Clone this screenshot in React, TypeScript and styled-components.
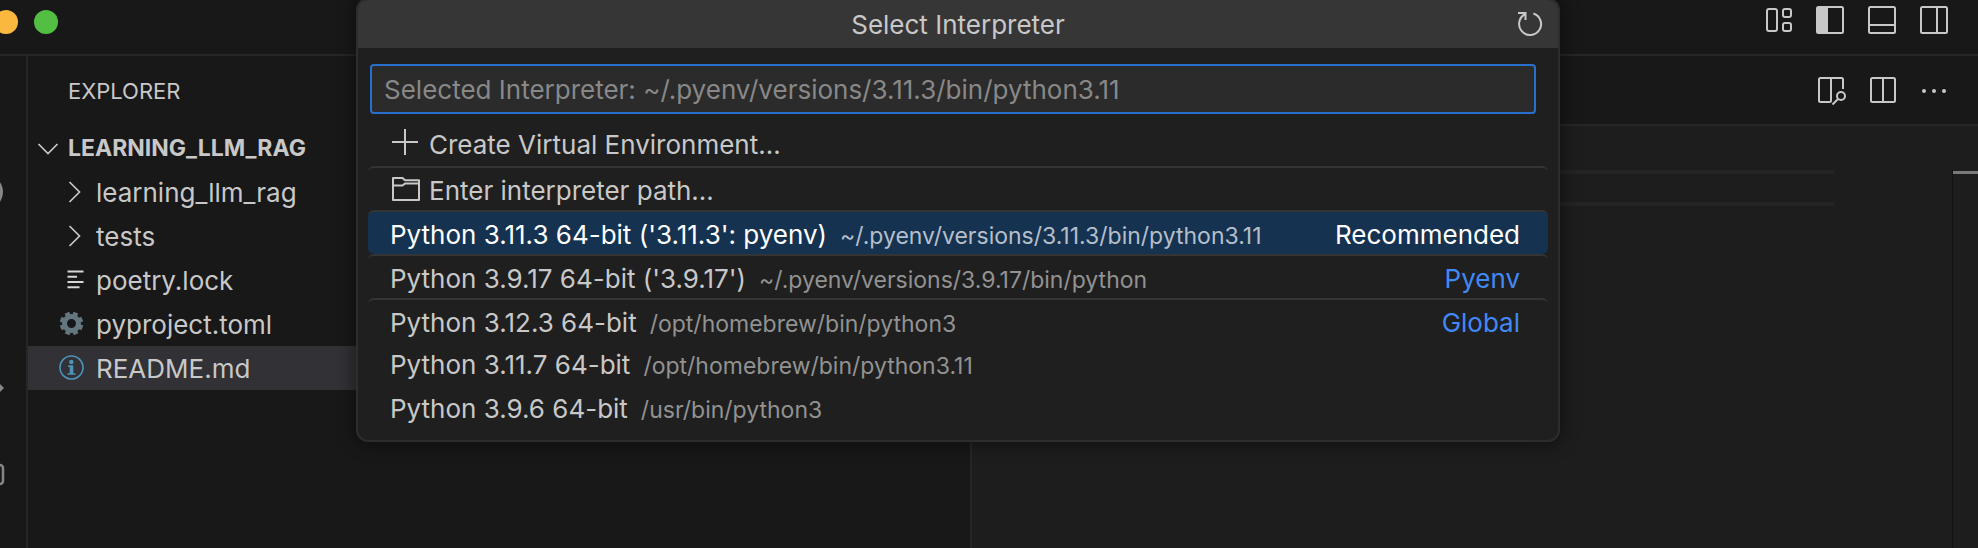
import React from "react";
import styled, { createGlobalStyle } from "styled-components";

const color = {
  chrome: "#181818",
  editor: "#1d1d1d",
  line: "#262626",
  text: "#c8c8c8",
  muted: "#929292",
  accent: "#2970cc",
  link: "#4189f7",
};

const GlobalStyle = createGlobalStyle`
  * { box-sizing: border-box; }
  body {
    margin: 0;
    background: ${color.chrome};
    color: ${color.text};
    font-family: Inter, "Liberation Sans", sans-serif;
    font-size: 26px;
  }
  button {
    border: 0;
    padding: 0;
    background: none;
    color: inherit;
    font: inherit;
    text-align: left;
    cursor: pointer;
  }
  ul { margin: 0; padding: 0; list-style: none; }
`;

const Window = styled.div`
  position: relative;
  display: flex;
  flex-direction: column;
  min-height: 100vh;
  overflow: hidden;
`;

const TitleBar = styled.header`
  display: flex;
  justify-content: space-between;
  align-items: flex-start;
  height: 56px;
  padding-right: 28px;
  border-bottom: 2px solid ${color.line};
`;

const TrafficLights = styled.div`
  display: flex;
  gap: 16px;
  margin: 10px 0 0 -6px;
`;

const Light = styled.button<{ $fill: string }>`
  width: 24px;
  height: 24px;
  border-radius: 50%;
  background: ${(p) => p.$fill};
`;

const Actions = styled.div<{ $top?: number }>`
  display: flex;
  gap: 20px;
  padding-top: ${(p) => p.$top ?? 0}px;
`;

const IconButton = styled.button`
  display: block;
  width: 32px;
  height: 32px;
`;

const Svg = styled.svg`
  display: block;
  flex: none;
  fill: none;
  stroke: currentColor;
  stroke-width: 2;
`;

const Body = styled.div`
  display: flex;
  flex: 1;
`;

const ActivityBar = styled.nav`
  flex: none;
  width: 28px;
  padding-top: 88px;
  border-right: 2px solid ${color.line};
  color: #868686;
`;

const ActivityButton = styled.button`
  display: block;
  width: 26px;
  height: 96px;
`;

const Sidebar = styled.aside`
  flex: 0 0 944px;
  min-width: 0;
  border-right: 2px solid ${color.line};
`;

const SidebarTitle = styled.h2`
  margin: 0;
  padding-left: 40px;
  font-size: 22px;
  font-weight: 400;
  line-height: 70px;
`;

const TreeRow = styled.button<{ $selected?: boolean; $root?: boolean }>`
  display: flex;
  align-items: center;
  gap: ${(p) => (p.$root ? 4 : 9)}px;
  width: 100%;
  height: 44px;
  padding-left: ${(p) => (p.$root ? 4 : 27)}px;
  background: ${(p) => (p.$selected ? "#313136" : "none")};
  font-size: ${(p) => (p.$root ? 23 : 26)}px;
  font-weight: ${(p) => (p.$root ? 700 : 400)};
`;

const Editor = styled.main`
  display: flex;
  flex: 1;
  flex-direction: column;
  min-width: 0;
  background: ${color.editor};
`;

const TabBar = styled.div`
  display: flex;
  align-items: center;
  justify-content: flex-end;
  height: 70px;
  padding-right: 28px;
  border-bottom: 2px solid ${color.line};
  background: ${color.chrome};
`;

const EditorBody = styled.div`
  display: flex;
  flex: 1;
  padding-top: 44px;
`;

const CurrentLine = styled.div`
  flex: 1;
  height: 36px;
  border: solid #242424;
  border-width: 4px 0;
`;

const Minimap = styled.div`
  width: 118px;
`;

const OverviewRuler = styled.div`
  width: 26px;
  padding-top: 1px;
  border-left: 1px solid #121212;
`;

const CursorMark = styled.div`
  height: 3px;
  background: #7a7a7a;
`;

const QuickPick = styled.section`
  position: absolute;
  top: -2px;
  left: 356px;
  width: 1204px;
  border: 2px solid #2d2d2d;
  border-radius: 12px;
  background: #1f1f1f;
  box-shadow: 0 0 16px 4px rgba(0, 0, 0, 0.36);
  overflow: hidden;
`;

const PickHeader = styled.div`
  display: grid;
  grid-template-columns: 1fr auto 1fr;
  align-items: center;
  height: 48px;
  padding: 0 12px;
  background: #363636;
`;

const PickTitle = styled.h1`
  grid-column: 2;
  margin: 0;
  font-size: 26px;
  font-weight: 400;
`;

const PickHeaderActions = styled.div`
  justify-self: end;
`;

const InputWrap = styled.div`
  padding: 16px 22px 8px 12px;
`;

const PickInput = styled.input`
  display: block;
  width: 100%;
  height: 50px;
  padding: 0 12px;
  border: 2px solid ${color.accent};
  border-radius: 4px;
  outline: 0;
  background: #2b2b2b;
  color: ${color.text};
  font: inherit;
  &::placeholder { color: #888888; opacity: 1; }
`;

const PickList = styled.ul`
  padding: 0 10px 10px;
`;

const PickRow = styled.button<{ $separator?: boolean; $active?: boolean }>`
  display: flex;
  align-items: center;
  width: 100%;
  height: 44px;
  padding: 0 28px 0 22px;
  border: 0 solid #343434;
  border-top-width: ${(p) => (p.$separator ? 2 : 0)}px;
  padding-bottom: ${(p) => (p.$separator ? 0 : 2)}px;
  border-radius: 6px;
  background: ${(p) => (p.$active ? "#153250" : "none")};
  color: ${(p) => (p.$active ? "#ffffff" : color.text)};
  white-space: nowrap;
`;

const RowIcon = styled.span`
  margin-right: 7px;
`;

const RowText = styled.span`
  display: flex;
  flex: 1;
  align-items: baseline;
  padding-top: 2px;
`;

const Description = styled.span<{ $active?: boolean }>`
  margin-left: 13px;
  color: ${(p) => (p.$active ? "#b5bfca" : color.muted)};
  font-size: 23px;
`;

const Category = styled.span<{ $active?: boolean }>`
  margin-left: auto;
  color: ${(p) => (p.$active ? "#ffffff" : color.link)};
`;

const Icon = ({ children }: { children: React.ReactNode }) => (
  <Svg width="32" height="32" viewBox="0 0 32 32" aria-hidden="true">
    {children}
  </Svg>
);

const gearTeeth = [0, 45, 90, 135, 180, 225, 270, 315];

const icons = {
  customize: (
    <>
      <rect x="5" y="5" width="10" height="22" rx="2" />
      <rect x="21" y="5" width="8" height="8" rx="2" />
      <rect x="21" y="19" width="8" height="8" rx="2" />
    </>
  ),
  sidebarLeft: (
    <>
      <rect x="3" y="3" width="26" height="26" rx="1.5" />
      <path d="M3 3h11v26H3z" fill="currentColor" stroke="none" />
    </>
  ),
  panel: (
    <>
      <rect x="3" y="3" width="26" height="26" rx="1.5" />
      <path d="M3 21h26" />
    </>
  ),
  sidebarRight: (
    <>
      <rect x="3" y="3" width="26" height="26" rx="1.5" />
      <path d="M19 3v26" />
    </>
  ),
  preview: (
    <>
      <path d="M29 15V5.5Q29 4 27.500 4H6.500Q5 4 5 5.500V26.500Q5 28 6.500 28H15.500Q17 28 17 26.500V4" />
      <circle cx="27" cy="22" r="4" />
      <path d="M24 25l-5.500 5.500" />
    </>
  ),
  split: (
    <>
      <rect x="5" y="4" width="24" height="24" rx="1.5" />
      <path d="M17 4v24" />
    </>
  ),
  more: (
    <g fill="currentColor" stroke="none">
      <circle cx="6" cy="17" r="2" />
      <circle cx="16" cy="17" r="2" />
      <circle cx="26" cy="17" r="2" />
    </g>
  ),
  refresh: (
    <>
      <path d="M19.400 5.500A11 11 0 1 1 11.500 6" />
      <path d="M4 5h7.500v7" />
    </>
  ),
  plus: <path d="M15 2v26M2 15h26" />,
  folder: (
    <>
      <path d="M3 5h9.500l2.500 2.300h14V27H3z" strokeLinejoin="round" />
      <path d="M3 12.500h9.500l2.500-2h14" />
    </>
  ),
};

const tree = [
  { name: "learning_llm_rag", icon: <path d="M14.500 6l10 10-10 10" strokeWidth="1.7" /> },
  { name: "tests", icon: <path d="M14.500 6l10 10-10 10" strokeWidth="1.7" /> },
  {
    name: "poetry.lock",
    icon: <path d="M12.500 7.500h16M12.500 12.700h9.500M12.500 18h16M12.500 23.300h12" stroke="#d4d7d6" />,
  },
  {
    name: "pyproject.toml",
    icon: (
      <g stroke="#64767f" transform="translate(16.500 15.500)">
        <circle r="7" strokeWidth="5" />
        {gearTeeth.map((angle) => (
          <path key={angle} d="M0 -8.500V-11.700" strokeWidth="5" transform={`rotate(${angle + 22})`} />
        ))}
      </g>
    ),
  },
  {
    name: "README.md",
    selected: true,
    icon: (
      <g stroke="#4f93b8">
        <circle cx="16.500" cy="15.500" r="11.500" strokeWidth="1.600" />
        <circle cx="16.300" cy="10" r="2.200" fill="#4f93b8" stroke="none" />
        <path d="M13 14.300h4.500M12.500 22h8" strokeWidth="1.600" />
        <path d="M16.500 13.500V22" strokeWidth="3.600" />
      </g>
    ),
  },
];

type Interpreter = {
  label: string;
  icon?: React.ReactNode;
  path?: string;
  category?: string;
  separator?: boolean;
  active?: boolean;
};

const interpreters: Interpreter[] = [
  { label: "Create Virtual Environment...", icon: icons.plus },
  { label: "Enter interpreter path...", icon: icons.folder, separator: true },
  {
    label: "Python 3.11.3 64-bit ('3.11.3': pyenv)",
    path: "~/.pyenv/versions/3.11.3/bin/python3.11",
    category: "Recommended",
    separator: true,
    active: true,
  },
  {
    label: "Python 3.9.17 64-bit ('3.9.17')",
    path: "~/.pyenv/versions/3.9.17/bin/python",
    category: "Pyenv",
    separator: true,
  },
  { label: "Python 3.12.3 64-bit", path: "/opt/homebrew/bin/python3", category: "Global", separator: true },
  { label: "Python 3.11.7 64-bit", path: "/opt/homebrew/bin/python3.11" },
  { label: "Python 3.9.6 64-bit", path: "/usr/bin/python3" },
];

const activities = [
  { name: "Search", icon: <circle cx="-14" cy="48" r="17" fill="currentColor" stroke="none" /> },
  { name: "Source Control", icon: null },
  { name: "Run and Debug", icon: <path d="M-4 48h4l4 4-4 4h-4z" fill="currentColor" stroke="none" /> },
  { name: "Extensions", icon: <rect x="-16" y="33" width="19" height="19" rx="3" strokeWidth="2.500" /> },
];

export default function App() {
  return (
    <Window>
      <GlobalStyle />
      <TitleBar>
        <TrafficLights>
          <Light $fill="#fab83f" aria-label="Minimize" />
          <Light $fill="#52bf43" aria-label="Zoom" />
        </TrafficLights>
        <Actions $top={4}>
          <IconButton aria-label="Customize layout"><Icon>{icons.customize}</Icon></IconButton>
          <IconButton aria-label="Toggle primary side bar"><Icon>{icons.sidebarLeft}</Icon></IconButton>
          <IconButton aria-label="Toggle panel"><Icon>{icons.panel}</Icon></IconButton>
          <IconButton aria-label="Toggle secondary side bar"><Icon>{icons.sidebarRight}</Icon></IconButton>
        </Actions>
      </TitleBar>
      <Body>
        <ActivityBar aria-label="Activity bar">
          {activities.map((item) => (
            <ActivityButton key={item.name} aria-label={item.name}>
              <Svg width="26" height="96" viewBox="0 0 26 96" aria-hidden="true">{item.icon}</Svg>
            </ActivityButton>
          ))}
        </ActivityBar>
        <Sidebar>
          <SidebarTitle>EXPLORER</SidebarTitle>
          <TreeRow $root>
            <Icon><path d="M6.500 12l9.500 9.500 9.500-9.500" strokeWidth="1.7" /></Icon>
            <span>LEARNING_LLM_RAG</span>
          </TreeRow>
          <ul>
            {tree.map((item) => (
              <li key={item.name}>
                <TreeRow $selected={item.selected}>
                  <Icon>{item.icon}</Icon>
                  <span>{item.name}</span>
                </TreeRow>
              </li>
            ))}
          </ul>
        </Sidebar>
        <Editor>
          <TabBar>
            <Actions>
              <IconButton aria-label="Open preview to the side"><Icon>{icons.preview}</Icon></IconButton>
              <IconButton aria-label="Split editor right"><Icon>{icons.split}</Icon></IconButton>
              <IconButton aria-label="More actions"><Icon>{icons.more}</Icon></IconButton>
            </Actions>
          </TabBar>
          <EditorBody>
            <CurrentLine />
            <Minimap />
            <OverviewRuler><CursorMark /></OverviewRuler>
          </EditorBody>
        </Editor>
      </Body>
      <QuickPick role="dialog" aria-labelledby="pick-title">
        <PickHeader>
          <PickTitle id="pick-title">Select Interpreter</PickTitle>
          <PickHeaderActions>
            <IconButton aria-label="Refresh interpreter list"><Icon>{icons.refresh}</Icon></IconButton>
          </PickHeaderActions>
        </PickHeader>
        <InputWrap>
          <PickInput
            type="text"
            aria-labelledby="pick-title"
            placeholder="Selected Interpreter: ~/.pyenv/versions/3.11.3/bin/python3.11"
          />
        </InputWrap>
        <PickList>
          {interpreters.map((item) => (
            <li key={item.label}>
              <PickRow $separator={item.separator} $active={item.active}>
                {item.icon && <RowIcon><Icon>{item.icon}</Icon></RowIcon>}
                <RowText>
                  <span>{item.label}</span>
                  {item.path && <Description $active={item.active}>{item.path}</Description>}
                  {item.category && <Category $active={item.active}>{item.category}</Category>}
                </RowText>
              </PickRow>
            </li>
          ))}
        </PickList>
      </QuickPick>
    </Window>
  );
}
